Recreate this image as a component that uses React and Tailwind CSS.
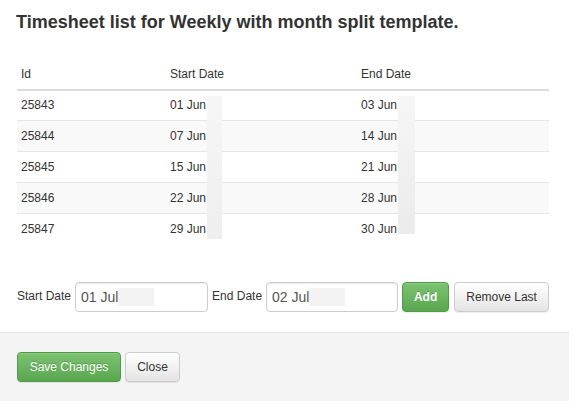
import React from "react";

const rows = [
  ["25843", "01 Jun", "03 Jun"],
  ["25844", "07 Jun", "14 Jun"],
  ["25845", "15 Jun", "21 Jun"],
  ["25846", "22 Jun", "28 Jun"],
  ["25847", "29 Jun", "30 Jun"],
];

export default function App() {
  return (
    <div
      className="w-[577px] h-[413px] bg-white text-[#333] overflow-hidden"
      style={{ fontFamily: '"Liberation Sans", Arial, sans-serif' }}
    >
      <div className="w-[569px] flex flex-col">
        {/* body */}
        <div className="pl-[17px] pr-[20px] pt-[12px] pb-[20px] flex flex-col">
          <h4 className="text-[18px] leading-[20px] font-bold text-[#333] -ml-[1px]">
            Timesheet list for Weekly with month split template.
          </h4>

          <div className="relative mt-[27px] text-[12px]">
            <div className="flex h-[32px] items-center border-b-2 border-[#dddddd]">
              <div className="w-[149px] pl-[4px]">Id</div>
              <div className="w-[191px] pl-[4px]">Start Date</div>
              <div className="flex-1 pl-[4px]">End Date</div>
            </div>
            {rows.map((r, i) => (
              <div
                key={r[0]}
                className={
                  "flex items-center " +
                  (i === 0 ? "h-[29px] pb-[1px] " : "h-[31px] border-t border-[#e6e6e6] ") +
                  (i % 2 === 1 ? "bg-[#f9f9f9]" : "bg-white")
                }
              >
                <div className="w-[149px] pl-[4px]">{r[0]}</div>
                <div className="w-[191px] pl-[4px]">{r[1]}</div>
                <div className="flex-1 pl-[4px]">{r[2]}</div>
              </div>
            ))}
            <div className="absolute left-[190px] top-[37px] w-[15px] h-[143px] bg-gradient-to-b from-[#f6f6f6] to-[#eeeeee]" />
            <div className="absolute left-[381px] top-[37px] w-[17px] h-[138px] bg-gradient-to-b from-[#f6f6f6] to-[#ebebeb]" />
          </div>

          <div className="mt-[38px] flex items-center h-[30px] text-[12px] whitespace-nowrap">
            <span className="shrink-0 -mt-[2px]">Start Date</span>
            <div className="shrink-0 ml-[4px] w-[133px] h-[30px] border border-[#cccccc] rounded-[4px] shadow-[inset_0_1px_1px_rgba(0,0,0,0.075)] flex items-center pl-[5px] text-[14px] text-[#555]">
              <span>01 Jul</span>
              <span className="inline-block w-[36px] h-[18px] bg-[#f3f3f3]" />
            </div>
            <span className="shrink-0 ml-[4px] -mt-[2px]">End Date</span>
            <div className="shrink-0 ml-[4px] w-[132px] h-[30px] border border-[#cccccc] rounded-[4px] shadow-[inset_0_1px_1px_rgba(0,0,0,0.075)] flex items-center pl-[5px] text-[14px] text-[#555]">
              <span>02 Jul</span>
              <span className="inline-block w-[36px] h-[18px] bg-[#f3f3f3]" />
            </div>
            <button className="shrink-0 ml-[4px] w-[47px] h-[30px] rounded-[4px] border border-[#4e9a45] bg-gradient-to-b from-[#7cc372] to-[#5aa64f] text-white font-bold text-[12px] [text-shadow:0_-1px_0_rgba(0,0,0,0.2)] shadow-[inset_0_1px_0_rgba(255,255,255,0.15),0_1px_1px_rgba(0,0,0,0.075)]">
              Add
            </button>
            <button className="shrink-0 ml-[5px] w-[95px] h-[30px] rounded-[4px] border border-[#cccccc] bg-gradient-to-b from-white to-[#e4e4e4] text-[#333] text-[12px] shadow-[inset_0_1px_0_rgba(255,255,255,0.15),0_1px_1px_rgba(0,0,0,0.075)]">
              Remove Last
            </button>
          </div>
        </div>

        {/* footer */}
        <div className="h-[69px] border-t border-[#e5e5e5] bg-[#f4f4f4] pl-[17px] pt-[19px] flex items-start gap-[4px] text-[12px]">
          <button className="w-[104px] h-[30px] rounded-[4px] border border-[#4e9a45] bg-gradient-to-b from-[#7cc372] to-[#5aa64f] text-white [text-shadow:0_-1px_0_rgba(0,0,0,0.2)] shadow-[inset_0_1px_0_rgba(255,255,255,0.15),0_1px_1px_rgba(0,0,0,0.075)]">
            Save Changes
          </button>
          <button className="w-[55px] h-[30px] rounded-[4px] border border-[#cccccc] bg-gradient-to-b from-white to-[#e4e4e4] text-[#333] shadow-[inset_0_1px_0_rgba(255,255,255,0.15),0_1px_1px_rgba(0,0,0,0.075)]">
            Close
          </button>
        </div>
      </div>
    </div>
  );
}
